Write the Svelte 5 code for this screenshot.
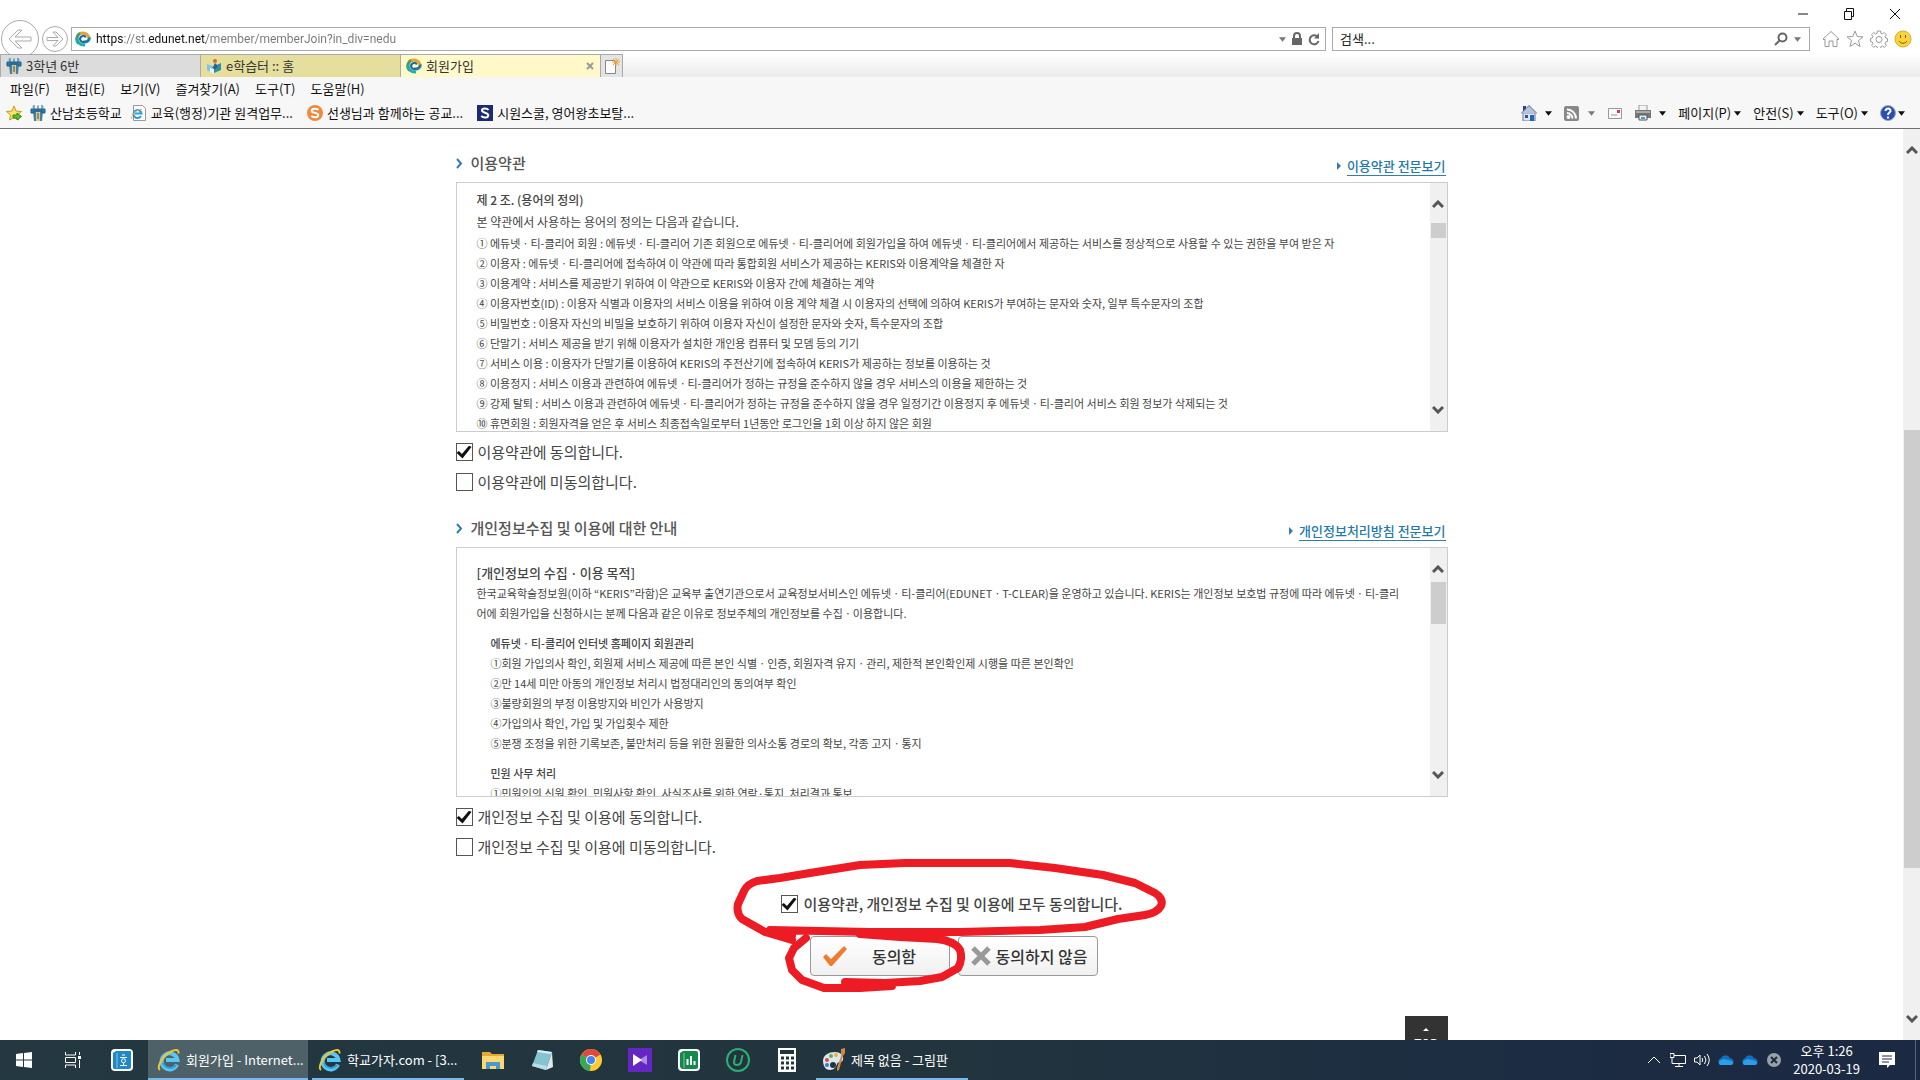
<script lang="ts">
  const menus = ["파일(F)", "편집(E)", "보기(V)", "즐겨찾기(A)", "도구(T)", "도움말(H)"];
  const commands = ["페이지(P)", "안전(S)", "도구(O)"];

  const terms = [
    "① 에듀넷ㆍ티-클리어 회원 : 에듀넷ㆍ티-클리어 기존 회원으로 에듀넷ㆍ티-클리어에 회원가입을 하여 에듀넷ㆍ티-클리어에서 제공하는 서비스를 정상적으로 사용할 수 있는 권한을 부여 받은 자",
    "② 이용자 : 에듀넷ㆍ티-클리어에 접속하여 이 약관에 따라 통합회원 서비스가 제공하는 KERIS와 이용계약을 체결한 자",
    "③ 이용계약 : 서비스를 제공받기 위하여 이 약관으로 KERIS와 이용자 간에 체결하는 계약",
    "④ 이용자번호(ID) : 이용자 식별과 이용자의 서비스 이용을 위하여 이용 계약 체결 시 이용자의 선택에 의하여 KERIS가 부여하는 문자와 숫자, 일부 특수문자의 조합",
    "⑤ 비밀번호 : 이용자 자신의 비밀을 보호하기 위하여 이용자 자신이 설정한 문자와 숫자, 특수문자의 조합",
    "⑥ 단말기 : 서비스 제공을 받기 위해 이용자가 설치한 개인용 컴퓨터 및 모뎀 등의 기기",
    "⑦ 서비스 이용 : 이용자가 단말기를 이용하여 KERIS의 주전산기에 접속하여 KERIS가 제공하는 정보를 이용하는 것",
    "⑧ 이용정지 : 서비스 이용과 관련하여 에듀넷ㆍ티-클리어가 정하는 규정을 준수하지 않을 경우 서비스의 이용을 제한하는 것",
    "⑨ 강제 탈퇴 : 서비스 이용과 관련하여 에듀넷ㆍ티-클리어가 정하는 규정을 준수하지 않을 경우 일정기간 이용정지 후 에듀넷ㆍ티-클리어 서비스 회원 정보가 삭제되는 것",
    "⑩ 휴면회원 : 회원자격을 얻은 후 서비스 최종접속일로부터 1년동안 로그인을 1회 이상 하지 않은 회원",
  ];

  const purposes = [
    "①회원 가입의사 확인, 회원제 서비스 제공에 따른 본인 식별ㆍ인증, 회원자격 유지ㆍ관리, 제한적 본인확인제 시행을 따른 본인확인",
    "②만 14세 미만 아동의 개인정보 처리시 법정대리인의 동의여부 확인",
    "③불량회원의 부정 이용방지와 비인가 사용방지",
    "④가입의사 확인, 가입 및 가입횟수 제한",
    "⑤분쟁 조정을 위한 기록보존, 불만처리 등을 위한 원활한 의사소통 경로의 확보, 각종 고지ㆍ통지",
  ];

  let termsAgree = $state(true);
  let termsDisagree = $state(false);
  let privacyAgree = $state(true);
  let privacyDisagree = $state(false);
  let allAgree = $state(true);
</script>

{#snippet swirl()}
  <svg class="icon" viewBox="0 0 16 16" fill="none" stroke-width="3">
    <path d="M3.5 12.5A6.3 6.3 0 0 1 6 2.2" stroke="#4b9a63" />
    <path d="M5 2.8A6.2 6.2 0 0 1 14 7" stroke="#e0a43a" />
    <path d="M14.2 6.5C14.5 10 11 11.8 8 10.6" stroke="#1f7f9f" />
    <path d="M2 7C2 11.5 5.500 14.500 10 14" stroke="#19b0b0" />
    <path d="M10.800 6.500A3 3 0 1 0 9.500 10.600" stroke="#23639e" stroke-width="2" />
  </svg>
{/snippet}

{#snippet tower()}
  <svg class="icon" viewBox="0 0 16 16">
    <path d="M3 6h10l-1 10H4z" fill="#4a7f9c" />
    <path d="M1 4h14v4h-3V6H4v2H1zM4 0v4M8 1v3M12 0v4" fill="#2f7ca8" stroke="#1f5f88" />
    <path d="M2 2h2M7 1h2M12 2h2" stroke="#5fb0dc" />
    <path d="M6 7h4v9H6z" fill="#d9c998" />
    <path d="M7 9h2M7 11h2M7 13h2" stroke="#35536a" />
  </svg>
{/snippet}

{#snippet explorer()}
  <svg class="app-icon" viewBox="0 0 24 24" fill="none">
    <path d="M20 16.500A8 8 0 1 1 20.500 12H9" stroke="#5cc6f2" stroke-width="4" />
    <path d="M19 17A7.500 7.500 0 0 1 6 15" stroke="#2c9fdc" stroke-width="2" />
    <path d="M3 22C-1 19 6 7 14 3.500c5-2.500 8-2 7.500 2" stroke="#f2c530" stroke-width="2" />
  </svg>
{/snippet}

{#snippet caret()}
  <svg class="caret" viewBox="0 0 8 5"><path d="M0 0h8L4 5z" fill="currentColor" /></svg>
{/snippet}

{#snippet chevron(d: string)}
  <svg class="chevron" viewBox="0 0 12 9"><path {d} fill="none" stroke="#555" stroke-width="3" /></svg>
{/snippet}

{#snippet boxScroll(offset: number, size: number)}
  <div class="box-scroll">
    {@render chevron("M1 7L6 2l5 5")}
    <div class="box-track">
      <div class="thumb" style="margin-top:{offset}px; height:{size}px"></div>
    </div>
    {@render chevron("M1 2l5 5 5-5")}
  </div>
{/snippet}

<div class="desktop">
  <header class="browser">
    <div class="window-controls">
      <button aria-label="최소화"><svg viewBox="0 0 12 12"><path d="M1 6h10" /></svg></button>
      <button aria-label="이전 크기로">
        <svg viewBox="0 0 12 12"><path d="M1.500 3.500h7v8h-7zM3.500 3.500v-3h7v8h-2" /></svg>
      </button>
      <button aria-label="닫기"><svg viewBox="0 0 12 12"><path d="M1 1l10 10M11 1L1 11" /></svg></button>
    </div>

    <div class="nav-row">
      <div class="history">
        <button class="back" aria-label="뒤로">
          <svg viewBox="0 0 40 40">
            <circle cx="20" cy="20" r="18.500" />
            <path d="M9 20l9-9h4l-7 7h16v4H15l7 7h-4z" />
          </svg>
        </button>
        <button class="forward" aria-label="앞으로">
          <svg viewBox="0 0 28 28">
            <circle cx="14" cy="14" r="12.500" />
            <path d="M22 14l-7-7h-3l5 5.500H6v3h11L12 21h3z" />
          </svg>
        </button>
      </div>
      <div class="address">
        {@render swirl()}
        <input type="text" aria-label="주소" value="https://st.edunet.net/member/memberJoin?in_div=nedu" />
        <span class="grey">{@render caret()}</span>
        <svg class="lock" viewBox="0 0 12 14">
          <path d="M1 6h10v7H1z" fill="#666" />
          <path d="M3 6V4a3 3 0 0 1 6 0v2" fill="none" stroke="#666" stroke-width="2" />
        </svg>
        <svg class="lock" viewBox="0 0 12 14">
          <path d="M10 5.500A4.500 4.500 0 1 0 10.500 9" fill="none" stroke="#666" stroke-width="2" />
          <path d="M11 1v5.500H6z" fill="#666" />
        </svg>
      </div>
      <div class="search">
        <input type="text" aria-label="검색" placeholder="검색..." />
        <svg class="lens" viewBox="0 0 14 14" fill="none" stroke="#666" stroke-width="2">
          <circle cx="8.500" cy="5.500" r="4" /><path d="M5.500 8.500L1 13" />
        </svg>
        <span class="grey">{@render caret()}</span>
      </div>
      <div class="tools">
        <svg viewBox="0 0 18 18"><path d="M1 9l8-7.500L17 9l-1 1-1-1v7.500h-4V11H7v5.500H3V9l-1 1z" /></svg>
        <svg viewBox="0 0 18 18"><path d="M9 1l2.200 5.500 5.800.4-4.500 3.700 1.500 5.900L9 13.300l-5 3.200 1.500-5.900L1 6.900l5.800-.4z" /></svg>
        <svg viewBox="0 0 18 18">
          <path d="M7.500 1h3l.4 2.200 1.600.7 1.800-1.300 2.100 2.100-1.300 1.800.7 1.600 1.700.4v3l-1.700.4-.7 1.600 1.300 1.800-2.100 2.100-1.800-1.300-1.600.7-.4 1.700h-3l-.4-1.700-1.600-.7-1.800 1.300-2.100-2.100 1.300-1.800-.7-1.600L.5 11.500v-3l1.700-.4.7-1.600-1.300-1.800 2.100-2.100 1.800 1.300 1.600-.7z" />
          <circle cx="9" cy="9.500" r="3" />
        </svg>
        <svg viewBox="0 0 18 18">
          <circle cx="9" cy="9" r="8" class="face" />
          <path d="M6.500 5v3M11.500 5v3M5 11c1.500 3 6.500 3 8 0" class="smile" />
        </svg>
      </div>
    </div>

    <nav class="tabs">
      <button class="tab">{@render tower()}<span>3학년 6반</span></button>
      <button class="tab khaki">
        <svg class="icon" viewBox="0 0 16 16">
          <path d="M1 6l5 2v7l-5-3z" fill="#7cc4e8" /><path d="M6 9l9-4v7l-7 3z" fill="#2f8f9c" />
          <path d="M4 10l4 1v5l-4-2z" fill="#e8f4f8" /><circle cx="9" cy="3" r="2" fill="#d9663a" />
          <path d="M7 9l2-4 3 3-3 4z" fill="#2a5fa8" />
        </svg>
        <span>e학습터 :: 홈</span>
      </button>
      <button class="tab current">
        {@render swirl()}<span>회원가입</span>
        <svg class="close" viewBox="0 0 8 8"><path d="M1 1l6 6M7 1L1 7" stroke="#999" stroke-width="2" /></svg>
      </button>
      <button class="new-tab" aria-label="새 탭">
        <svg viewBox="0 0 18 18">
          <path d="M2.500 3.500h8l2 2v11h-10z" fill="#fff" stroke="#888" />
          <path d="M13 1v8M9 5h8M10 2l6 6M16 2l-6 6" stroke="#f0a030" />
        </svg>
      </button>
    </nav>

    <div class="menu-row">
      {#each menus as menu}
        <button>{menu}</button>
      {/each}
    </div>

    <div class="fav-row">
      <div class="favorites">
        <button class="add" aria-label="즐겨찾기 추가">
          <svg class="icon" viewBox="0 0 16 16">
            <path d="M8 1l2 5 5.500.5-4 3.500 1 5L8 12.500 3.500 15l1-5-4-3.500L6 6z" fill="#fbe36a" stroke="#c79a1c" />
            <path d="M7 10h4V8l4.500 3.500L11 15v-2H7z" fill="#5cc02e" stroke="#2f8a14" />
          </svg>
        </button>
        <a href="#sannam">{@render tower()}산남초등학교</a>
        <a href="#remote">
          <svg class="icon" viewBox="0 0 16 16" fill="none">
            <path d="M2.500.5h9l3 3v12h-12z" fill="#fff" stroke="#999" />
            <path d="M10 11A4 4 0 1 1 10.500 8.500H4" stroke="#2f9be0" stroke-width="2" />
            <path d="M1 14C-1 12 4 5 11 4" stroke="#eab52c" />
          </svg>
          교육(행정)기관 원격업무...
        </a>
        <a href="#teacher">
          <svg class="icon" viewBox="0 0 16 16" fill="none">
            <circle cx="8" cy="8" r="8" fill="#ee8a3c" />
            <path d="M11.500 5C10 3 4.500 3.200 4.700 5.800c.2 2.600 6.500 1.500 6.600 4.200 0 2.700-5 3-7 .8" stroke="#fff" stroke-width="2" />
          </svg>
          선생님과 함께하는 공교...
        </a>
        <a href="#siwon">
          <svg class="icon" viewBox="0 0 16 16" fill="none">
            <path d="M0 0h16v16H0z" fill="#1c2b70" />
            <path d="M11.500 5C10 3 5 3 5 5.500s6.300 2 6.300 4.700c0 2.800-5 3-7 .8" stroke="#fff" stroke-width="2" />
          </svg>
          시원스쿨, 영어왕초보탈...
        </a>
      </div>
      <div class="commands">
        <button aria-label="홈">
          <svg class="icon" viewBox="0 0 16 16">
            <path d="M2 8h12v8H2z" fill="#dfe6f2" stroke="#6b7a96" /><path d="M2 1h3v5H2z" fill="#2a3f9a" />
            <path d="M0 8.500L8 .5l8 8" fill="#b8c4dc" stroke="#5a6c94" /><path d="M9 10h4v6H9z" fill="#2a62b4" />
            <path d="M4 10h3v3H4z" fill="#35508a" />
          </svg>
          {@render caret()}
        </button>
        <button class="grey" aria-label="피드">
          <svg class="icon" viewBox="0 0 16 16" fill="none">
            <rect y="1" width="15" height="15" rx="2" fill="#888" />
            <path d="M3 4.500a9 9 0 0 1 9 9M3 8a5.500 5.500 0 0 1 5.500 5.500" stroke="#fff" stroke-width="2" />
            <circle cx="4.500" cy="12" r="2" fill="#fff" />
          </svg>
          {@render caret()}
        </button>
        <button aria-label="메일">
          <svg class="icon" viewBox="0 0 16 16">
            <path d="M1.500 3.500h13v10h-13z" fill="#fafafa" stroke="#999" />
            <path d="M10 5h3v3h-3z" fill="#d0405c" /><path d="M4 10h6" stroke="#999" />
          </svg>
        </button>
        <button aria-label="인쇄">
          <svg class="icon" viewBox="0 0 16 16">
            <path d="M4 0h8v6H4z" fill="#f4f4f4" stroke="#999" /><path d="M0 5h16v8H0z" fill="#777" />
            <path d="M1 6h14v2H1z" fill="#aaa" /><path d="M4 10h8v5H4z" fill="#eef" stroke="#555" />
            <path d="M6 12h4v2H6z" fill="#38a8c8" />
          </svg>
          {@render caret()}
        </button>
        {#each commands as command}
          <button>{command}{@render caret()}</button>
        {/each}
        <button class="help" aria-label="도움말">
          <svg class="icon" viewBox="0 0 16 16" fill="none">
            <circle cx="8" cy="8" r="7.500" fill="#2a4fb0" stroke="#9aa8c8" />
            <path d="M5.500 6C5.500 2.500 11 3 10.500 6 10.200 7.500 8 7.800 8 10M8 11.500v2" stroke="#fff" stroke-width="2" />
          </svg>
          {@render caret()}
        </button>
      </div>
    </div>
  </header>

  <div class="viewport">
    <main>
      <div class="content">
        <section>
          <div class="headline">
            <h2>
              <svg viewBox="0 0 7 11"><path d="M1 1l4 4.500L1 10" /></svg>이용약관
            </h2>
            <a href="#terms"><i></i><span>이용약관 전문보기</span></a>
          </div>
          <div class="box">
            <div class="box-text">
              <h3>제 2 조. (용어의 정의)</h3>
              <p class="intro">본 약관에서 사용하는 용어의 정의는 다음과 같습니다.</p>
              {#each terms as term}
                <p>{term}</p>
              {/each}
            </div>
            {@render boxScroll(6, 15)}
          </div>
          <div class="choices">
            <label><input type="checkbox" bind:checked={termsAgree} />이용약관에 동의합니다.</label>
            <label><input type="checkbox" bind:checked={termsDisagree} />이용약관에 미동의합니다.</label>
          </div>
        </section>

        <section>
          <div class="headline">
            <h2>
              <svg viewBox="0 0 7 11"><path d="M1 1l4 4.500L1 10" /></svg>개인정보수집 및 이용에 대한 안내
            </h2>
            <a href="#privacy"><i></i><span>개인정보처리방침 전문보기</span></a>
          </div>
          <div class="box">
            <div class="box-text privacy">
              <h3 class="large">[개인정보의 수집ㆍ이용 목적]</h3>
              <p>
                한국교육학술정보원(이하 “KERIS”라함)은 교육부 출연기관으로서 교육정보서비스인 에듀넷ㆍ티-클리어(EDUNETㆍT-CLEAR)을 운영하고 있습니다. KERIS는 개인정보 보호법 규정에 따라 에듀넷ㆍ티-클리어에 회원가입을 신청하시는 분께 다음과 같은 이유로 정보주체의 개인정보를 수집ㆍ이용합니다.
              </p>
              <div class="group">
                <h4>에듀넷ㆍ티-클리어 인터넷 홈페이지 회원관리</h4>
                {#each purposes as purpose}
                  <p>{purpose}</p>
                {/each}
              </div>
              <div class="group">
                <h4>민원 사무 처리</h4>
                <p>①민원인의 신원 확인, 민원사항 확인, 사실조사를 위한 연락·통지, 처리결과 통보</p>
              </div>
            </div>
            {@render boxScroll(0, 42)}
          </div>
          <div class="choices">
            <label><input type="checkbox" bind:checked={privacyAgree} />개인정보 수집 및 이용에 동의합니다.</label>
            <label><input type="checkbox" bind:checked={privacyDisagree} />개인정보 수집 및 이용에 미동의합니다.</label>
          </div>
        </section>

        <div class="consent">
          <label class="all">
            <input type="checkbox" bind:checked={allAgree} />이용약관, 개인정보 수집 및 이용에 모두 동의합니다.
          </label>
          <div class="buttons">
            <button>
              <svg viewBox="0 0 26 22"><path d="M2 12l3-3 5 5L23 1l3 3-15 17H9z" fill="#ee7b30" /></svg>
              <span>동의함</span>
            </button>
            <button class="decline">
              <svg viewBox="0 0 20 20"><path d="M2 2l16 16M18 2L2 18" stroke="#999" stroke-width="5" /></svg>
              <span>동의하지 않음</span>
            </button>
          </div>
          <svg class="ink" viewBox="0 0 460 150">
            <path d="M72 90L45 82L22 69Q16 63 18 54L24 41Q27 34 37 31L60 28L90 23L140 15L185 13H290L335 18L383 25L415 33L435 43Q444 49 441 56Q437 63 425 65L398 69L365 77L320 80L240 82L150 82L100 81L50 80L72 86" />
            <path d="M86 88L74 98L69 108L72 120L82 130L104 138H140L172 136L125 132L165 133L200 131L222 127L238 118Q243 109 240 100Q235 91 217 89L180 87L140 84" />
          </svg>
        </div>
      </div>
      <a class="top" href="#top"><i></i>TOP</a>
    </main>
    <div class="page-scroll">
      {@render chevron("M1 7L6 2l5 5")}
      <div class="page-track"><div class="thumb"></div></div>
      {@render chevron("M1 2l5 5 5-5")}
    </div>
  </div>

  <footer class="taskbar">
    <button class="task" aria-label="시작">
      <svg viewBox="0 0 16 16"><path d="M0 2l7-1v6.500H0zM8 1l8-1v7.500H8zM0 8.500h7V15l-7-1zM8 8.500h8V16l-8-1z" fill="#fff" /></svg>
    </button>
    <button class="task" aria-label="작업 보기">
      <svg viewBox="0 0 16 16" fill="none" stroke="#fff">
        <path d="M.5 0v3h10V0M.5 16v-3h10v3M.5 5.500h10v5H.5zM14.500 0v3M14.500 8v8" /><path d="M13 4h3v3h-3z" fill="#fff" stroke="none" />
      </svg>
    </button>
    <button class="task large" aria-label="한글">
      <svg viewBox="0 0 24 24">
        <rect x="1" y="1" width="22" height="22" rx="4" fill="#fff" />
        <path d="M3 5l3-2h14a1 1 0 0 1 1 1v16l-2 1H4l-1-1z" fill="#1e88c8" />
        <path d="M7 5v15" stroke="#8cc8ec" fill="none" />
        <path d="M12 7h3M10 9.500h7M10 17.500h7M13.500 15v2" stroke="#fff" fill="none" />
        <circle cx="13.500" cy="12.800" r="2" fill="none" stroke="#fff" />
      </svg>
    </button>
    <button class="window active">{@render explorer()}<span>회원가입 - Internet...</span></button>
    <button class="window second">{@render explorer()}<span>학교가자.com - [3...</span></button>
    <button class="task large" aria-label="파일 탐색기">
      <svg viewBox="0 0 24 24">
        <path d="M1 4h8l2 2h12v15H1z" fill="#e5a832" /><path d="M1 8h22v13H1z" fill="#fbd876" />
        <path d="M5 21v-7h14v7h-4v-3H9v3z" fill="#4a98cc" />
      </svg>
    </button>
    <button class="task large" aria-label="메모장">
      <svg viewBox="0 0 24 24">
        <path d="M8 2l14 2-6 18L2 18z" fill="#86c3d0" /><path d="M22 4l1 15-7 3z" fill="#dfe9ec" />
        <path d="M8 2l14 2-1 2L7 4z" fill="#d8eef2" /><path d="M3 15l14 3-1 4-14-4z" fill="#b9dfe6" />
      </svg>
    </button>
    <button class="task large" aria-label="Chrome">
      <svg viewBox="0 0 24 24">
        <circle cx="12" cy="12" r="11" fill="#fccb34" />
        <path d="M12 12L2.500 6.500a11 11 0 0 1 19 0z" fill="#dd4b3e" />
        <path d="M12 12l-1 11A11 11 0 0 1 2.500 6.500z" fill="#3aa757" />
        <circle cx="12" cy="12" r="5" fill="#fff" /><circle cx="12" cy="12" r="4" fill="#4285f4" />
      </svg>
    </button>
    <button class="task large" aria-label="동영상">
      <svg viewBox="0 0 24 24">
        <path d="M0 0h24v24H0z" fill="#6427c4" /><path d="M19 7v10l-8-5z" fill="#a98be0" /><path d="M5 6v12l9-6z" fill="#fff" />
      </svg>
    </button>
    <button class="task large" aria-label="한셀">
      <svg viewBox="0 0 24 24">
        <rect x="1" y="1" width="22" height="22" rx="4" fill="#fff" />
        <path d="M3 5l3-2h13a2 2 0 0 1 2 2v15l-2 1H5l-2-2z" fill="#128a4c" />
        <path d="M7 5v15" stroke="#7cc8a0" /><path d="M10.500 11v6M14 8v9M17.500 13v4" stroke="#fff" stroke-width="2" />
      </svg>
    </button>
    <button class="task large" aria-label="U">
      <svg viewBox="0 0 24 24" fill="none" stroke="#2cae74">
        <circle cx="12" cy="12" r="11" stroke-width="2" />
        <path d="M9.500 7L8 14c-.6 4 6 4 7 0l1.500-7" stroke-width="2" />
      </svg>
    </button>
    <button class="task large" aria-label="계산기">
      <svg viewBox="0 0 24 24">
        <path d="M3 0h18v24H3z" fill="#fff" /><path d="M5 2h14v4H5z" fill="#22343e" />
        <path d="M6 10h3M11 10h3M16 10h3M6 15h3M11 15h3M16 15h3M6 20h3M11 20h3M16 20h3" stroke="#22343e" stroke-width="3" />
      </svg>
    </button>
    <button class="window paint">
      <svg class="app-icon" viewBox="0 0 24 24">
        <path d="M1 13C1 7 7 4 13 4c6 0 9 4 8 8-1 3-5 1-6 4s-3 6-7 6c-5 0-7-5-7-9z" fill="#d9e8f2" />
        <circle cx="5" cy="12" r="2" fill="#d8483c" /><circle cx="9" cy="8" r="2" fill="#6fae3c" />
        <circle cx="14" cy="7" r="2" fill="#e8b33a" /><circle cx="11" cy="17" r="3" fill="#22343e" />
        <circle cx="5" cy="17" r="2" fill="#3a78c0" />
        <path d="M19 1l4-1v5l-2 3-4 14-2 1v-3l4-12z" fill="#cf8a4a" />
      </svg>
      <span>제목 없음 - 그림판</span>
    </button>

    <div class="tray">
      <svg viewBox="0 0 16 16"><path d="M2 11l6-6 6 6" /></svg>
      <svg viewBox="0 0 16 16"><path d="M4 3.500h11.500v8H4M0 1.500h4v4H0zM2 5.500v6h2M9 11.500v3M5 14.500h8" /></svg>
      <svg viewBox="0 0 16 16"><path d="M.5 6v4h2.500l3 3V3L3 6zM8 6q1.500 2 0 4M10.500 4q3 4 0 8M13 2q4.500 6 0 12" /></svg>
      {#each [0, 1] as drive (drive)}
        <svg class="fill" viewBox="0 0 16 16">
          <path d="M1 12a4 4 0 0 1 2-6 5 5 0 0 1 9 0 4 4 0 0 1 3 6z" fill="#1170bd" />
          <path d="M2 13a3 3 0 0 1 1-5l3-1 8 2a3 3 0 0 1 0 4z" fill="#2d9de8" />
        </svg>
      {/each}
      <svg class="fill" viewBox="0 0 16 16">
        <circle cx="8" cy="8" r="7" fill="#98a0aa" /><path d="M5 5l6 6M11 5l-6 6" stroke="#1c2a3c" stroke-width="2" />
      </svg>
      <div class="clock"><span>오후 1:26</span><span>2020-03-19</span></div>
      <svg class="fill notice" viewBox="0 0 16 16">
        <path d="M0 0h16v13h-5l-3 3v-3H0z" fill="#fff" /><path d="M3 4h10M3 7h10M3 10h7" stroke="#1c2a40" />
      </svg>
      <div class="peek"></div>
    </div>
  </footer>
</div>

<style>
  :global(body) {
    margin: 0;
  }

  .desktop {
    display: flex;
    flex-direction: column;
    height: 100vh;
    overflow: hidden;
    background: #fff;
    color: #111;
    font-family: "Noto Sans CJK KR", "Noto Sans", sans-serif;
    font-size: 13px;
    line-height: 20px;
  }

  button {
    display: flex;
    align-items: center;
    padding: 0;
    border: 0;
    background: none;
    color: inherit;
    font: inherit;
  }

  a {
    color: inherit;
    text-decoration: none;
  }

  svg {
    flex: none;
    display: block;
  }

  p,
  h2,
  h3,
  h4 {
    margin: 0;
  }

  .icon {
    width: 16px;
    height: 16px;
  }

  .caret {
    width: 7px;
    height: 5px;
  }

  .grey {
    color: #777;
  }

  /* browser chrome */
  .browser {
    flex: none;
    border-bottom: 1px solid #707070;
  }

  .window-controls {
    display: flex;
    justify-content: flex-end;
    gap: 34px;
    height: 27px;
    padding-right: 19px;
  }

  .window-controls svg {
    width: 12px;
    height: 12px;
    fill: none;
    stroke: #111;
  }

  .nav-row {
    display: flex;
    align-items: center;
    height: 24px;
    padding-right: 8px;
    margin-bottom: 3px;
  }

  .history {
    display: flex;
    align-items: center;
    gap: 1px;
    width: 71px;
    height: 24px;
    flex: none;
  }

  .history svg {
    fill: none;
    stroke: #aaa;
  }

  .back svg {
    width: 40px;
    height: 40px;
  }

  .forward svg {
    width: 28px;
    height: 28px;
  }

  .address,
  .search {
    display: flex;
    align-items: center;
    box-sizing: border-box;
    height: 24px;
    border: 1px solid #aaa;
    background: #fff;
  }

  .address {
    flex: 1;
    gap: 5px;
    padding: 0 5px 0 3px;
    margin-right: 6px;
  }

  .address input,
  .search input {
    flex: 1;
    min-width: 0;
    padding: 0;
    border: 0;
    outline: 0;
    font: inherit;
  }

  .address input {
    /* host stays dark, the rest of the URL is dimmed */
    background: linear-gradient(90deg, #111 0 28px, #777 28px 53px, #111 53px 110px, #777 110px);
    background-clip: text;
    color: transparent;
    font-family: Roboto, sans-serif;
    font-size: 12px;
  }

  .search {
    width: 25%;
    gap: 6px;
    padding: 0 8px 0 7px;
    margin-right: 12px;
  }

  .search input::placeholder {
    color: #222;
    opacity: 1;
  }

  .lock {
    width: 12px;
    height: 14px;
  }

  .lens {
    width: 14px;
    height: 14px;
  }

  .tools {
    display: flex;
    gap: 6px;
  }

  .tools svg {
    width: 18px;
    height: 18px;
    fill: none;
    stroke: #999;
  }

  .tools .face {
    fill: #fbd43c;
    stroke: #d8ae2a;
  }

  .tools .smile {
    stroke: #7a5a10;
  }

  .tabs {
    position: relative;
    display: flex;
    height: 23px;
    border-left: 1px solid #aaa;
    background: linear-gradient(#fff, #ebebeb);
  }

  .tab {
    box-sizing: border-box;
    width: 200px;
    gap: 4px;
    padding: 0 6px 0 5px;
    border: solid #aaa;
    border-width: 1px 1px 0 0;
    background: #dcdcdc;
    color: #333;
  }

  .tab span {
    flex: 1;
    text-align: left;
  }

  .close {
    width: 8px;
    height: 8px;
  }

  .khaki {
    background: #e6de9c;
  }

  .current {
    background: #fff9ca;
  }

  .new-tab {
    box-sizing: border-box;
    width: 22px;
    border: solid #aaa;
    border-width: 1px 1px 0 0;
    background: #e4e4e4;
  }

  .new-tab svg {
    width: 18px;
    height: 18px;
    margin-left: 2px;
  }

  .menu-row {
    display: flex;
    gap: 15px;
    height: 23px;
    padding-left: 10px;
    background: #f7f7f7;
  }

  .fav-row {
    display: flex;
    justify-content: space-between;
    height: 26px;
    padding: 0 15px 2px 6px;
    background: #f7f7f7;
  }

  .favorites,
  .commands {
    display: flex;
    align-items: center;
  }

  .favorites a {
    display: flex;
    align-items: center;
    gap: 4px;
    margin-right: 14px;
  }

  .favorites .add + a {
    margin-right: 9px;
  }

  .favorites .add {
    margin-right: 8px;
  }

  .commands {
    gap: 12px;
  }

  .commands button {
    gap: 3px;
  }

  .commands button[aria-label] {
    gap: 8px;
  }

  .commands .help[aria-label] {
    gap: 2px;
  }

  /* page */
  .viewport {
    display: flex;
    flex: 1;
    min-height: 0;
  }

  main {
    position: relative;
    flex: 1;
    overflow: hidden;
  }

  .content {
    width: 992px;
    max-width: 100%;
    margin: 0 auto;
    padding-top: 23px;
  }

  section {
    margin-bottom: 20px;
  }

  .headline {
    display: flex;
    align-items: flex-start;
    justify-content: space-between;
    height: 30px;
  }

  h2 {
    display: flex;
    align-items: center;
    gap: 8px;
    color: #555;
    font-size: 15px;
    font-weight: 500;
    line-height: 22px;
  }

  h2 svg {
    width: 7px;
    height: 11px;
    fill: none;
    stroke: #2f7fae;
    stroke-width: 2;
  }

  .headline a {
    display: flex;
    align-items: center;
    gap: 6px;
    margin: 4px 2px 0 0;
    color: #2279a8;
    font-weight: 500;
    line-height: 19px;
  }

  .headline a i {
    border: solid transparent;
    border-width: 4px 0 4px 4px;
    border-left-color: #2f7fae;
  }

  .headline a span {
    border-bottom: 1px solid #2f7fae;
  }

  .box {
    display: flex;
    box-sizing: border-box;
    height: 250px;
    border: 1px solid #ccc;
  }

  .box-text {
    flex: 1;
    overflow: hidden;
    padding: 6px 22px 0 20px;
    color: #444;
    font-size: 11px;
    word-break: break-all;
  }

  .box-text h3 {
    font-size: 12px;
    font-weight: 500;
    line-height: 22px;
  }

  .box-text .intro {
    font-size: 12px;
    line-height: 22px;
  }

  .box-text.privacy {
    padding-top: 15px;
  }

  .box-text .large {
    font-size: 13px;
    line-height: 20px;
  }

  .group {
    padding: 10px 0 0 14px;
  }

  h4 {
    font-size: 11px;
    font-weight: 500;
  }

  .box-scroll {
    display: flex;
    flex-direction: column;
    align-items: center;
    width: 17px;
    padding: 17px 0;
    background: #f0f0f0;
    box-sizing: border-box;
  }

  .chevron {
    width: 12px;
    height: 9px;
  }

  .box-track {
    flex: 1;
    padding-top: 8px;
  }

  .box-track .thumb {
    width: 15px;
    background: #cdcdcd;
  }

  .choices {
    padding-top: 5px;
  }

  label {
    display: flex;
    align-items: center;
    gap: 5px;
    height: 30px;
    color: #444;
    font-size: 15px;
  }

  input[type="checkbox"] {
    display: grid;
    place-items: center;
    box-sizing: border-box;
    width: 17px;
    height: 18px;
    margin: 0;
    border: 1px solid #555;
    background: #fff;
    appearance: none;
  }

  input[type="checkbox"]:checked::after {
    width: 15px;
    height: 13px;
    background: #111;
    clip-path: polygon(0 55%, 16% 42%, 36% 66%, 84% 0, 100% 12%, 40% 100%);
    content: "";
  }

  .consent {
    position: relative;
    display: flex;
    flex-direction: column;
    align-items: center;
    gap: 17px;
    padding-top: 7px;
  }

  .all {
    gap: 6px;
    font-weight: 500;
  }

  .buttons {
    display: flex;
    gap: 8px;
    padding-left: 4px;
  }

  .buttons button {
    box-sizing: border-box;
    width: 140px;
    height: 40px;
    padding: 0 7px 0 10px;
    border: 1px solid #999;
    border-radius: 4px;
    background: linear-gradient(#fff, #f0f0f0);
    color: #333;
    font-size: 16px;
    font-weight: 500;
  }

  .buttons .decline {
    padding: 0 4px 0 12px;
  }

  .buttons span {
    flex: 1;
  }

  .buttons svg {
    width: 26px;
    height: 22px;
  }

  .buttons .decline svg {
    width: 20px;
    height: 20px;
  }

  .ink {
    position: absolute;
    top: -32px;
    left: 50%;
    width: 460px;
    height: 150px;
    margin-left: -232px;
    pointer-events: none;
    fill: none;
    stroke: #ed1c24;
    stroke-width: 8;
    stroke-linecap: round;
    stroke-linejoin: round;
  }

  /* sits at the lower edge and is cut off by the window */
  .top {
    position: absolute;
    right: calc(50% - 496px);
    bottom: -18px;
    display: flex;
    flex-direction: column;
    align-items: center;
    gap: 4px;
    box-sizing: border-box;
    width: 43px;
    height: 42px;
    padding-top: 12px;
    background: #333;
    color: #fff;
    font-size: 12px;
    line-height: 16px;
  }

  .top i {
    border: solid transparent;
    border-width: 0 3px 3px;
    border-bottom-color: #fff;
  }

  .page-scroll {
    display: flex;
    flex-direction: column;
    align-items: center;
    box-sizing: border-box;
    width: 17px;
    padding: 17px 0;
    background: #f0f0f0;
  }

  .page-track {
    flex: 1;
    width: 100%;
  }

  .page-track .thumb {
    height: 51%;
    margin: 275px 0 0 1px;
    background: #cdcdcd;
  }

  /* taskbar */
  .taskbar {
    display: flex;
    flex: none;
    height: 40px;
    background: linear-gradient(90deg, #233841, #22343e 50%, #1c2c42 80%, #1b2942);
    color: #fff;
  }

  .task {
    justify-content: center;
    width: 48px;
    margin-right: 1px;
  }

  .task svg {
    width: 16px;
    height: 16px;
  }

  .task.large svg,
  .app-icon {
    width: 24px;
    height: 24px;
  }

  .window {
    box-sizing: border-box;
    width: 152px;
    gap: 5px;
    padding: 2px 4px 0 6px;
    border-bottom: 2px solid #76b9ed;
    white-space: nowrap;
  }

  .window.active {
    width: 160px;
    padding-left: 9px;
    margin: 0 4px 0 1px;
    background: #4e6169;
  }

  .window.second {
    margin-right: 5px;
  }

  .window.paint {
    margin-left: 4px;
  }

  .tray {
    display: flex;
    align-items: center;
    gap: 8px;
    margin-left: auto;
  }

  .tray svg {
    width: 16px;
    height: 16px;
    fill: none;
    stroke: #fff;
  }

  .tray .fill {
    stroke: none;
  }

  .clock {
    display: flex;
    flex-direction: column;
    align-items: center;
    margin: 0 11px 0 3px;
    line-height: 18px;
  }

  .peek {
    width: 4px;
    height: 40px;
    margin-left: 12px;
    border-left: 1px solid #5a6878;
  }
</style>
